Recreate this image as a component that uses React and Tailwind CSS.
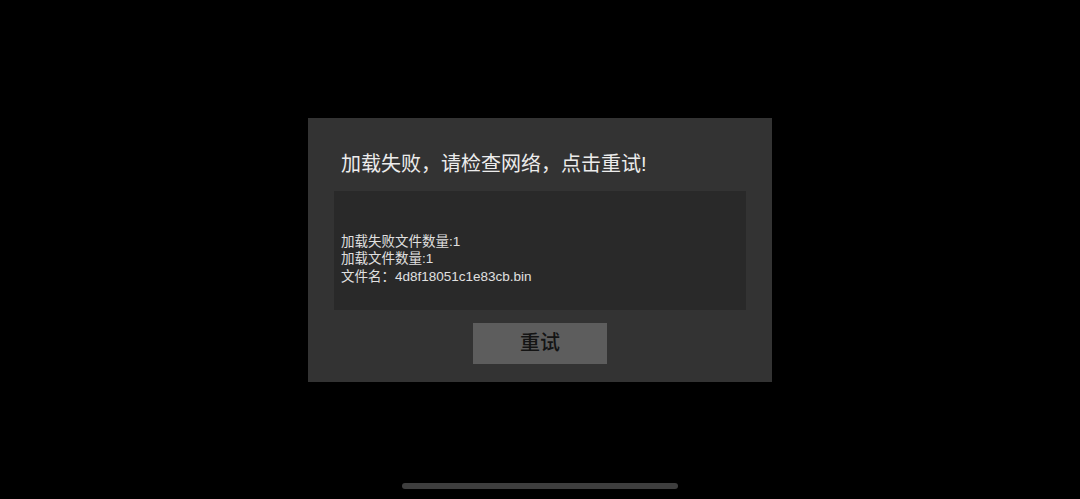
import React from 'react';

const font = { fontFamily: '"Liberation Sans", "Noto Sans CJK SC", sans-serif' };

export default function App() {
  return (
    <div
      className="relative w-full h-[499px] bg-black flex items-center justify-center"
      style={font}
    >
      {/* Dialog */}
      <div className="w-[464px] h-[264px] bg-[#333333] flex flex-col pt-[32px]">
        <h1 className="pl-[33px] text-[20px] leading-[28px] text-[#ececec]">
          加载失败，请检查网络，点击重试!
        </h1>

        <div className="mx-[26px] mt-[13px] h-[119px] bg-[#292929] flex items-center px-[7px]">
          <div className="text-[13.5px] leading-[17.5px] text-[#e0e0e0]">
            <div>&nbsp;</div>
            <div>加载失败文件数量:1</div>
            <div>加载文件数量:1</div>
            <div>文件名：4d8f18051c1e83cb.bin</div>
          </div>
        </div>

        <div className="flex justify-center mt-[13px]">
          <button
            type="button"
            className="w-[134px] h-[41px] bg-[#5d5d5d] text-[#141414] text-[20px] font-medium flex items-center justify-center"
          >
            重试
          </button>
        </div>
      </div>

      {/* Home indicator */}
      <div className="absolute bottom-[10px] left-1/2 -translate-x-1/2 w-[276px] h-[6px] rounded-full bg-[#3e3e3e]" />
    </div>
  );
}
